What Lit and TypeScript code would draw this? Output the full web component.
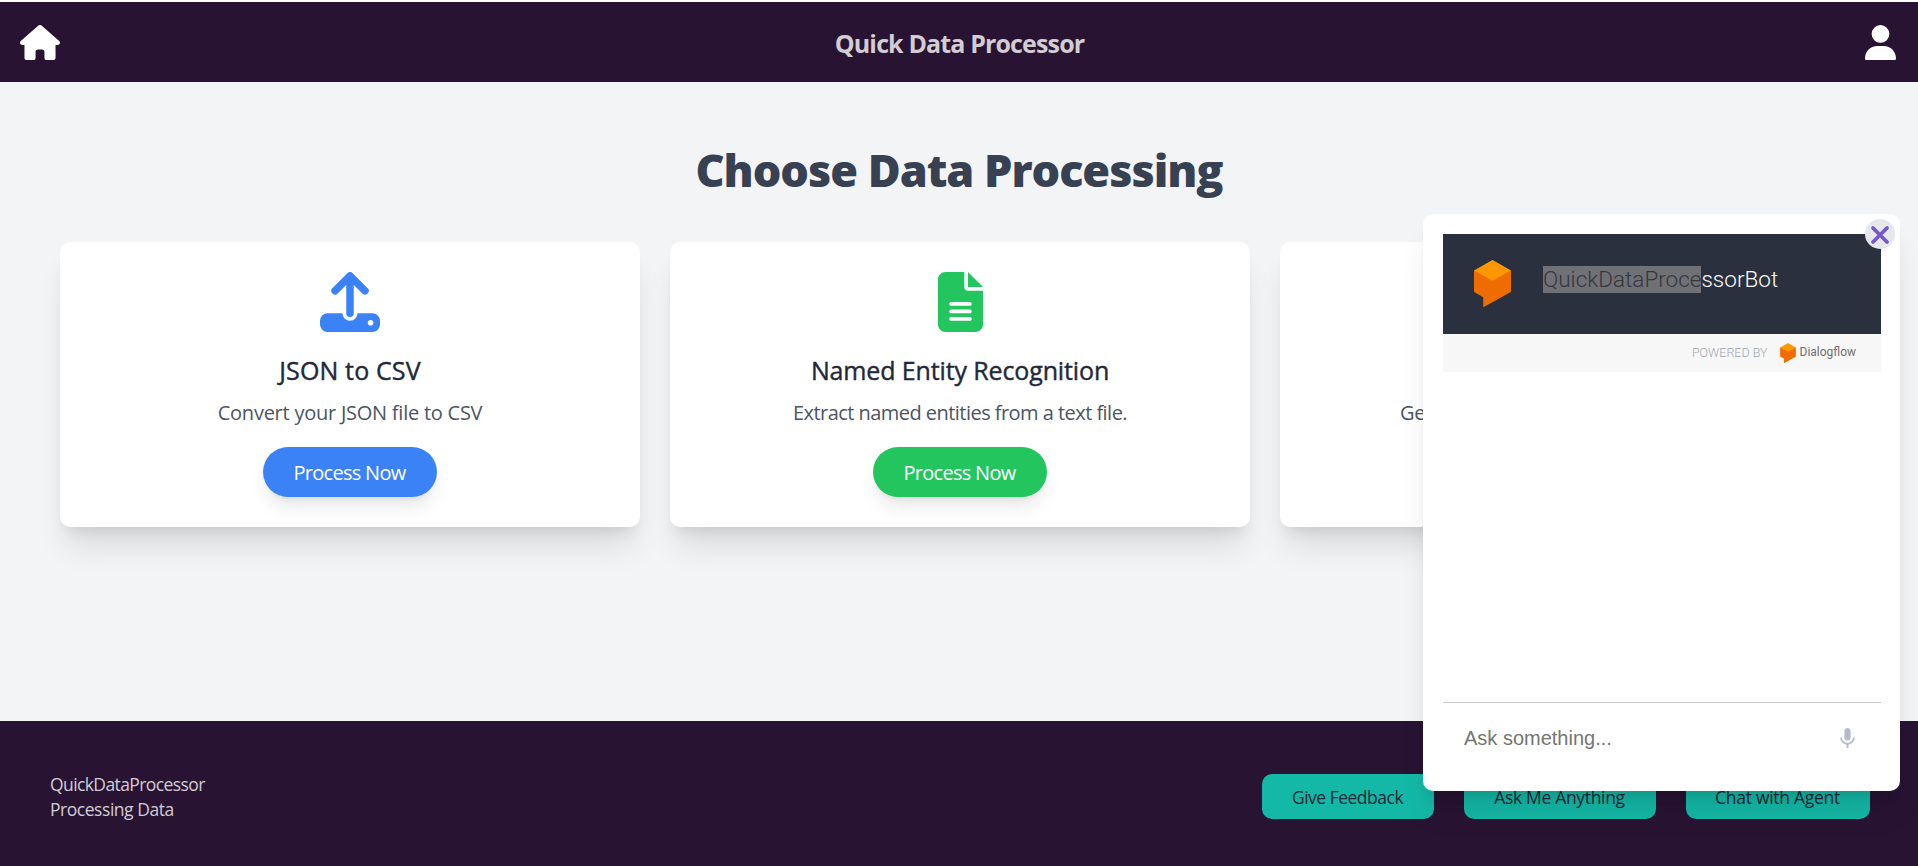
import { LitElement, html, css } from "lit";
import { customElement } from "lit/decorators.js";

const cube = html`<svg class="cube" viewBox="0 0 37 47">
  <path fill="#ef6c00" d="M0 10.500 18.500 16 37 10.500V31.200q0 .6-.6 1L10.200 46.800q-1 .5-1-.6V37.200L.7 32.200q-.7-.4-.7-1Z" />
  <path fill="#ff9800" d="M0 10.500 17.900.3q.6-.4 1.200 0L37 10.500 18.500 20.800Z" />
</svg>`;

const uploadIcon = html`<svg class="icon" width="60" height="60" viewBox="0 0 60 60">
  <rect x="0" y="41.200" width="60" height="18.800" rx="7.500" fill="#3b82f6" />
  <path d="M30 36v5.300" stroke="#fff" stroke-width="15" stroke-linecap="round" />
  <path d="M15 18.800 30 3.800 45 18.800M30 4.500V41.200" fill="none" stroke="#3b82f6" stroke-width="7.500" stroke-linecap="round" stroke-linejoin="round" />
  <circle cx="50.600" cy="50.700" r="2.800" fill="#fff" />
</svg>`;

const fileIcon = html`<svg class="icon" width="45" height="60" viewBox="0 0 384 512">
  <path fill="#22c55e" d="M64 0C28.700 0 0 28.700 0 64V448c0 35.300 28.700 64 64 64H320c35.300 0 64-28.700 64-64V160H256c-17.700 0-32-14.300-32-32V0H64zM256 0V128H384L256 0zM112 256H272c8.800 0 16 7.200 16 16s-7.200 16-16 16H112c-8.800 0-16-7.200-16-16s7.200-16 16-16zm0 64H272c8.800 0 16 7.200 16 16s-7.200 16-16 16H112c-8.800 0-16-7.200-16-16s7.200-16 16-16zm0 64H272c8.800 0 16 7.200 16 16s-7.200 16-16 16H112c-8.800 0-16-7.200-16-16s7.200-16 16-16z" />
</svg>`;

@customElement("app-root")
export class AppRoot extends LitElement {
  static styles = css`
    :host { display: block; }
    * { box-sizing: border-box; }
    svg { display: block; }
    .page { position: relative; height: 866px; overflow: hidden; display: flex; flex-direction: column; background: #f3f4f6; border-top: 2px solid #fff; font-family: "Open Sans", sans-serif; }
    .top { flex: none; height: 80px; padding: 0 22px 0 20px; display: flex; justify-content: space-between; align-items: center; background: #281333; color: #fff; }
    .top svg { fill: currentColor; margin-top: 1px; }
    .brand { margin-top: 2px; padding-right: 6px; text-align: center; font-size: 25px; line-height: 34px; font-weight: 700; letter-spacing: -0.86px; color: #d1cdd3; }
    main { flex: 1; padding: 56px 58px 0 60px; }
    h1 { margin: 0; height: 104px; padding-right: 2px; line-height: 64px; text-align: center; font-size: 45px; font-weight: 800; letter-spacing: -1.03px; color: #374151; }
    .cards { display: grid; grid-template-columns: repeat(3, 580px); gap: 30px; }
    .card { height: 285px; padding: 30px; border-radius: 10px; background: #fff; display: flex; flex-direction: column; align-items: center; box-shadow: 0 25px 31px -6px rgba(0, 0, 0, 0.1), 0 10px 12.5px -7.5px rgba(0, 0, 0, 0.1); }
    .icon { flex: none; }
    .card h2 { margin: 19px 0 0; height: 41px; line-height: 38px; font-size: 25px; font-weight: 500; color: #1f2937; -webkit-text-stroke: 0.4px #1f2937; white-space: nowrap; }
    .card p { margin: 0; height: 55px; line-height: 42px; font-size: 20px; color: #4b5563; white-space: nowrap; }
    .t1 { letter-spacing: 0.14px; }
    .t2 { letter-spacing: -0.13px; }
    .p1 { letter-spacing: -0.24px; }
    .p2 { letter-spacing: -0.54px; }
    .card .p3 { align-self: flex-start; margin: 120px 0 0 90px; letter-spacing: -0.3px; }
    .btn { width: 174px; height: 50px; padding-right: 1px; border-radius: 25px; text-align: center; line-height: 51px; font-size: 20px; letter-spacing: -0.7px; color: #fff; box-shadow: 0 12.5px 19px -4px rgba(0, 0, 0, 0.1), 0 5px 7.5px -5px rgba(0, 0, 0, 0.1); }
    .blue { background: #3b82f6; }
    .green { background: #22c55e; }
    footer { flex: none; height: 145px; padding: 0 48px 0 50px; display: flex; align-items: center; justify-content: space-between; background: #281333; font-size: 17.5px; }
    .about { margin-top: 7px; line-height: 25px; letter-spacing: -0.6px; color: #d1cdd3; }
    .about .second { letter-spacing: -0.46px; }
    .actions { display: flex; gap: 30px; margin-top: 6px; }
    .action { height: 45px; padding-right: 1px; border-radius: 10px; background: #14b8a6; color: #1f2937; line-height: 47px; text-align: center; white-space: nowrap; }
    .feedback { width: 172px; letter-spacing: -0.5px; }
    .ask { width: 192px; letter-spacing: -0.33px; }
    .agent { width: 184px; letter-spacing: -0.28px; }
    .chat { position: absolute; left: 1423px; top: 212px; width: 477px; height: 577px; padding: 20px 19px 20px 20px; border-radius: 10px; background: #fff; display: flex; flex-direction: column; box-shadow: 0 25px 31px -6px rgba(0, 0, 0, 0.1), 0 10px 12.5px -7.5px rgba(0, 0, 0, 0.1); font-family: Roboto, sans-serif; }
    .chat-head { flex: none; height: 100px; padding-left: 31px; display: flex; align-items: flex-start; background: #2b303e; color: #fff; }
    .chat-head .cube { flex: none; width: 37px; height: 47px; margin-top: 26px; }
    .bot { margin: 32px 0 0 32px; display: flex; font-size: 22.5px; font-weight: 300; line-height: 27px; }
    .picked { background: #707176; color: #36373b; }
    .powered { flex: none; height: 38px; padding-right: 25px; display: flex; justify-content: flex-end; align-items: flex-start; background: #f7f7f7; line-height: 37px; }
    .by { font-size: 12.5px; font-weight: 300; color: #9fa5b2; }
    .powered .cube { width: 16px; height: 20px; margin: 9px 4px 0 12px; }
    .flow { font-size: 12px; color: #707070; }
    .log { flex: 1; }
    .entry { flex: none; height: 69px; padding: 1px 21px 0 21px; border-top: 1px solid #ccc; display: flex; align-items: center; justify-content: space-between; font: 20px "Liberation Sans", sans-serif; color: #757575; }
    .entry span, .entry svg { margin-top: 1px; }
    .close { position: absolute; left: 442px; top: 5px; width: 30px; height: 30px; border-radius: 50%; background: #e5e7eb; }
  `;

  render() {
    return html`<div class="page">
      <header class="top">
        <svg width="40" height="35.500" viewBox="0 0 576 512">
          <path d="M575.800 255.500c0 18-15 32.100-32 32.100h-32l.7 160.200c0 2.700-.2 5.400-.5 8.100V472c0 22.100-17.900 40-40 40H456c-1.100 0-2.200 0-3.300-.1c-1.400 .1-2.800 .1-4.200 .1H416 392c-22.100 0-40-17.900-40-40V448 384c0-17.700-14.300-32-32-32H256c-17.700 0-32 14.300-32 32v64 24c0 22.100-17.900 40-40 40H160 128.100c-1.500 0-3-.1-4.500-.2c-1.200 .1-2.400 .2-3.600 .2H104c-22.100 0-40-17.900-40-40V360c0-.9 0-1.900 .1-2.800V287.600H32c-18 0-32-14-32-32.100c0-9 3-17 10-24L266.400 8c7-7 15-8 22-8s15 2 21 7L564.800 231.500c8 7 12 15 11 24z" />
        </svg>
        <div class="brand">Quick Data Processor</div>
        <svg width="31" height="35.500" viewBox="0 0 448 512">
          <path d="M224 256A128 128 0 1 0 224 0a128 128 0 1 0 0 256zm-45.700 48C79.800 304 0 383.800 0 482.300C0 498.700 13.300 512 29.700 512H418.300c16.400 0 29.700-13.300 29.700-29.700C448 383.800 368.200 304 269.700 304H178.300z" />
        </svg>
      </header>
      <main>
        <h1>Choose Data Processing</h1>
        <div class="cards">
          <section class="card">
            ${uploadIcon}
            <h2 class="t1">JSON to CSV</h2>
            <p class="p1">Convert your JSON file to CSV</p>
            <div class="btn blue">Process Now</div>
          </section>
          <section class="card">
            ${fileIcon}
            <h2 class="t2">Named Entity Recognition</h2>
            <p class="p2">Extract named entities from a text file.</p>
            <div class="btn green">Process Now</div>
          </section>
          <section class="card"><p class="p3">Ge</p></section>
        </div>
      </main>
      <footer>
        <div class="about">
          <div>QuickDataProcessor</div>
          <div class="second">Processing Data</div>
        </div>
        <div class="actions">
          <div class="action feedback">Give Feedback</div>
          <div class="action ask">Ask Me Anything</div>
          <div class="action agent">Chat with Agent</div>
        </div>
      </footer>
      <aside class="chat">
        <div class="chat-head">
          ${cube}
          <div class="bot"><span class="picked">QuickDataProce</span><span>ssorBot</span></div>
        </div>
        <div class="powered"><span class="by">POWERED BY</span>${cube}<span class="flow">Dialogflow</span></div>
        <div class="log"></div>
        <div class="entry">
          <span>Ask something...</span>
          <svg width="25" height="25" viewBox="0 0 24 24">
            <path fill="#b7bbc7" d="M12 14c1.660 0 2.990-1.340 2.990-3L15 5c0-1.660-1.340-3-3-3S9 3.340 9 5v6c0 1.660 1.340 3 3 3zm5.300-3c0 3-2.540 5.100-5.300 5.100S6.700 14 6.700 11H5c0 3.410 2.720 6.230 6 6.720V21h2v-3.280c3.280-.48 6-3.300 6-6.720h-1.700z" />
          </svg>
        </div>
        <svg class="close" viewBox="0 0 30 30">
          <path d="M8 9 22 23M22 9 8 23" stroke="#7559c8" stroke-width="3.800" stroke-linecap="round" />
        </svg>
      </aside>
    </div>`;
  }
}
